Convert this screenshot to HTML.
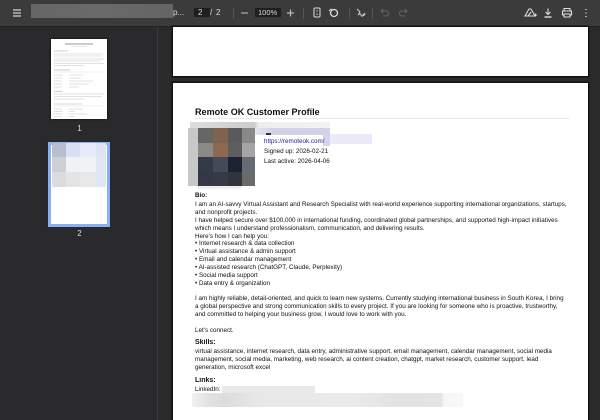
<!DOCTYPE html>
<html><head><meta charset="utf-8">
<style>
html,body{margin:0;padding:0;width:600px;height:420px;overflow:hidden;background:#2a2a2a;font-family:"Liberation Sans",sans-serif}
.a{position:absolute}
#tb{left:0;top:0;width:600px;height:26px;background:#3b3b3b;border-bottom:1px solid #222}
.tt{position:absolute;color:#ddd;font-size:8px;line-height:10px;white-space:nowrap;filter:blur(.3px)}
.div{position:absolute;top:8px;width:1px;height:11px;background:#555}
#side{left:0;top:27px;width:157px;height:393px;background:#2a2a2c;border-right:1px solid #3a3a3a}
.page{background:#fff;position:absolute}
.l{position:absolute;left:195px;font-size:6.3px;line-height:8px;color:#111;white-space:nowrap;filter:blur(.25px)}
.b{font-weight:bold;color:#111}
.m{position:absolute}
svg{filter:blur(.3px)}
</style></head><body>
<div class="a" id="tb"></div>
<svg class="a" style="left:12px;top:8px" width="11" height="10"><path d="M1 2h8M1 5h8M1 8h8" stroke="#bbb" stroke-width="1.5"/></svg>
<div class="a" style="left:31px;top:4px;width:142px;height:14px;background:linear-gradient(90deg,#666,#6a6a6a 50%,#646464)"></div>
<div class="tt" style="left:173px;top:8px">p...</div>
<div class="a" style="left:194px;top:8px;width:16px;height:9px;background:#1f1f1f"></div>
<div class="tt" style="left:198px;top:8px">2</div>
<div class="tt" style="left:210px;top:8px">/</div>
<div class="tt" style="left:216px;top:8px">2</div>
<div class="div" style="left:233px"></div>
<svg class="a" style="left:239px;top:8px" width="60" height="10"><path d="M2 5h7" stroke="#aaa" stroke-width="1.2"/><path d="M48 5h7M51.500 1.500v7" stroke="#bbb" stroke-width="1.2"/></svg>
<div class="a" style="left:255px;top:8px;width:26px;height:9px;background:#1f1f1f"></div>
<div class="tt" style="left:258px;top:8px;font-size:7.500px">100%</div>
<div class="div" style="left:303px"></div>
<svg class="a" style="left:312px;top:6px" width="32" height="14" fill="none" stroke="#ddd" stroke-width="1"><rect x="2" y="2" width="6" height="9" rx="1"/><path d="M5 4v1.500M5 7.500v1.500" stroke-width=".9"/><circle cx="22" cy="7" r="3.500" stroke-width="1.300"/><path d="M17 5l2-2 2 1" stroke-width=".9"/></svg>
<div class="div" style="left:349px"></div>
<svg class="a" style="left:355px;top:7px" width="12" height="12" fill="none" stroke="#ccc" stroke-width="1"><path d="M2 2l3 3-2 3c1-1 3-2 3 0s3 1 4-1"/><path d="M7 9l3-3"/></svg>
<div class="div" style="left:372px"></div>
<svg class="a" style="left:379px;top:8px" width="30" height="10" fill="none" stroke="#666" stroke-width="1"><path d="M2 3h5a2.500 2.500 0 0 1 0 5H4M2 3l2-2M2 3l2 2"/><path d="M28 3h-5a2.500 2.500 0 0 0 0 5h3M28 3l-2-2M28 3l-2 2"/></svg>
<svg class="a" style="left:522px;top:6px" width="72" height="14" fill="none" stroke="#ddd" stroke-width="1.100"><path d="M3 10l4-7h2l4 7zM6 10l3-4"/><path d="M12 9h3M13.500 7.500v3" stroke-width=".9"/><path d="M26 2.500v5.500M23.500 6l2.500 2.500L28.500 6" /><path d="M22.500 11h7" stroke-width="1.400"/><path d="M42 5V2.500h6V5M42 9h-1.500V5h9V9H48M42 8h6v3h-6z"/><path d="M64 3v1M64 6.500v1M64 10v1" stroke-width="1.400"/></svg>

<div class="a" id="side"></div>
<div class="a" style="left:51px;top:39px;width:56px;height:80px;background:#fff;box-shadow:0 0 2px #000"></div>
<svg class="a" style="left:51px;top:39px" width="56" height="80" stroke="#c4c4c4" stroke-width=".6"><path d="M14 5h28" stroke="#999" stroke-width="1"/><path d="M20 7.500h16" stroke="#ddd"/><path d="M3 12h14" stroke="#aaa"/><path d="M3 15h50M3 17h48M3 20h50M3 22h46M3 24.500h50M3 26.500h30" /><path d="M3 31h16" stroke="#aaa"/><path d="M3 33h50" stroke="#e0e0e0"/><path d="M3 36h8M18 36h14M3 39h8M18 39h12M3 42h8M18 42h24M3 45h8M18 45h20M3 48h8M18 48h10"/><path d="M3 52.500h8" stroke="#aaa"/><path d="M3 55h50M3 57.500h48M3 60h30"/><path d="M3 65h28" stroke="#aaa"/><path d="M3 67h50" stroke="#e0e0e0"/><path d="M3 70h8M18 70h14M3 72.500h8M18 72.500h6M3 75h8M18 75h18M3 77.500h8M18 77.500h6"/></svg>
<div class="a" style="left:0;top:124px;width:157px;text-align:center;color:#ddd;font-size:8px;line-height:9px;margin-left:1px">1</div>
<div class="a" style="left:48px;top:142px;width:56px;height:79px;border:3px solid #8ab0ee;background:#fff;box-shadow:0 0 0 1px #1f2a3a"></div>
<div class="m" style="left:52px;top:143px;width:14px;height:14px;background:#b8bdd0"></div>
<div class="m" style="left:66px;top:143px;width:14px;height:14px;background:#d8dff2"></div>
<div class="m" style="left:80px;top:143px;width:16px;height:14px;background:#e6ecfb"></div>
<div class="m" style="left:96px;top:143px;width:10px;height:14px;background:#dbe3f5"></div>
<div class="m" style="left:52px;top:157px;width:14px;height:15px;background:#cfd0d6"></div>
<div class="m" style="left:66px;top:157px;width:14px;height:15px;background:#eff1f4"></div>
<div class="m" style="left:80px;top:157px;width:16px;height:15px;background:#f0f2f6"></div>
<div class="m" style="left:96px;top:157px;width:10px;height:30px;background:#dfe6f5"></div>
<div class="m" style="left:52px;top:172px;width:14px;height:15px;background:#dcdcde"></div>
<div class="m" style="left:66px;top:172px;width:14px;height:15px;background:#e4e4e6"></div>
<div class="m" style="left:80px;top:172px;width:16px;height:15px;background:#e8e8ea"></div>
<div class="a" style="left:0;top:229px;width:157px;text-align:center;color:#ddd;font-size:8px;line-height:9px;margin-left:1px">2</div>

<div class="page" style="left:173px;top:27px;width:415px;height:49px;box-shadow:0 0 0 1.500px #111"></div>
<div class="page" style="left:173px;top:83px;width:415px;height:337px;box-shadow:0 0 0 1.500px #111"></div>

<div class="l b" style="top:106px;font-size:9.050px;line-height:12px">Remote OK Customer Profile</div>
<div class="a" style="left:195px;top:118px;width:375px;height:1px;background:#e8e8e8"></div>

<div class="m" style="left:190px;top:122px;width:140px;height:6px;background:linear-gradient(90deg,#ddd 0,#ccc 46%,#eee 49%,#f2f2f2 100%)"></div>
<div class="m" style="left:188px;top:128px;width:10px;height:58px;background:#c8c8c8"></div>
<div class="m" style="left:198px;top:186px;width:44px;height:3px;background:#eee"></div>
<div class="m" style="left:198px;top:128px;width:15px;height:15px;background:#666"></div>
<div class="m" style="left:213px;top:128px;width:15px;height:15px;background:#7d6350"></div>
<div class="m" style="left:228px;top:128px;width:14px;height:15px;background:#5a5a5a"></div>
<div class="m" style="left:242px;top:128px;width:13px;height:15px;background:#888"></div>
<div class="m" style="left:198px;top:143px;width:15px;height:14px;background:#8a8a88"></div>
<div class="m" style="left:213px;top:143px;width:15px;height:14px;background:#8b6a50"></div>
<div class="m" style="left:228px;top:143px;width:14px;height:14px;background:#5e5e5e"></div>
<div class="m" style="left:242px;top:143px;width:13px;height:14px;background:#a5a5a5"></div>
<div class="m" style="left:198px;top:157px;width:15px;height:15px;background:#353a48"></div>
<div class="m" style="left:213px;top:157px;width:15px;height:15px;background:#454a58"></div>
<div class="m" style="left:228px;top:157px;width:14px;height:15px;background:#1d2233"></div>
<div class="m" style="left:242px;top:157px;width:13px;height:15px;background:#666a72"></div>
<div class="m" style="left:198px;top:172px;width:15px;height:14px;background:#333844"></div>
<div class="m" style="left:213px;top:172px;width:15px;height:14px;background:#363a46"></div>
<div class="m" style="left:228px;top:172px;width:14px;height:14px;background:#30343c"></div>
<div class="m" style="left:242px;top:172px;width:13px;height:14px;background:#6a6a6a"></div>
<div class="m" style="left:255px;top:128px;width:75px;height:7px;background:linear-gradient(90deg,#e4e4ee,#d0d2e8 25%,#d0d2e8)"></div>
<div class="m" style="left:323px;top:134px;width:49px;height:10px;background:#eaeafa"></div>
<div class="m" style="left:323px;top:134px;width:7px;height:12px;background:#d4d5ea"></div>
<div class="m" style="left:266px;top:133px;width:5px;height:1.500px;background:#333"></div>

<div class="l" style="top:138px;left:264px;color:#1a1a9a">https://remoteok.com/</div>
<div class="l" style="top:148px;left:264px">Signed up: 2026-02-21</div>
<div class="l" style="top:158px;left:264px">Last active: 2026-04-06</div>

<div class="l b" style="top:192px">Bio:</div>
<div class="l" style="top:200.500px">I am an AI-savvy Virtual Assistant and Research Specialist with real-world experience supporting international organizations, startups,</div>
<div class="l" style="top:208.500px">and nonprofit projects.</div>
<div class="l" style="top:216.500px">I have helped secure over $100,000 in international funding, coordinated global partnerships, and supported high-impact initiatives</div>
<div class="l" style="top:224.500px">which means I understand professionalism, communication, and delivering results.</div>
<div class="l" style="top:232.500px">Here's how I can help you:</div>
<div class="l" style="top:240px">• Internet research &amp; data collection</div>
<div class="l" style="top:248px">• Virtual assistance &amp; admin support</div>
<div class="l" style="top:256px">• Email and calendar management</div>
<div class="l" style="top:264px">• AI-assisted research (ChatGPT, Claude, Perplexity)</div>
<div class="l" style="top:271.500px">• Social media support</div>
<div class="l" style="top:279.500px">• Data entry &amp; organization</div>
<div class="l" style="top:295px">I am highly reliable, detail-oriented, and quick to learn new systems. Currently studying international business in South Korea, I bring</div>
<div class="l" style="top:303px">a global perspective and strong communication skills to every project. If you are looking for someone who is proactive, trustworthy,</div>
<div class="l" style="top:311px">and committed to helping your business grow, I would love to work with you.</div>
<div class="l" style="top:326.500px">Let's connect.</div>
<div class="l b" style="top:339px;font-size:7px">Skills:</div>
<div class="l" style="top:348px">virtual assistance, internet research, data entry, administrative support, email management, calendar management, social media</div>
<div class="l" style="top:356px">management, social media, marketing, web research, ai content creation, chatgpt, market research, customer support, lead</div>
<div class="l" style="top:364px">generation, microsoft excel</div>
<div class="l b" style="top:376.500px;font-size:7px">Links:</div>
<div class="l" style="top:385.500px">LinkedIn:</div>
<div class="m" style="left:222px;top:386px;width:93px;height:7px;background:#e8e8e8"></div>
<div class="m" style="left:192px;top:393px;width:271px;height:14px;background:linear-gradient(90deg,#f2f2f2 0,#e4e4e4 5%,#dcdcdc 12%,#e8e8e8 25%,#eaeaea 60%,#e2e2e2 75%,#e4e4e4 92%,#f6f6f6 93%,#f8f8f8)"></div>
</body></html>
